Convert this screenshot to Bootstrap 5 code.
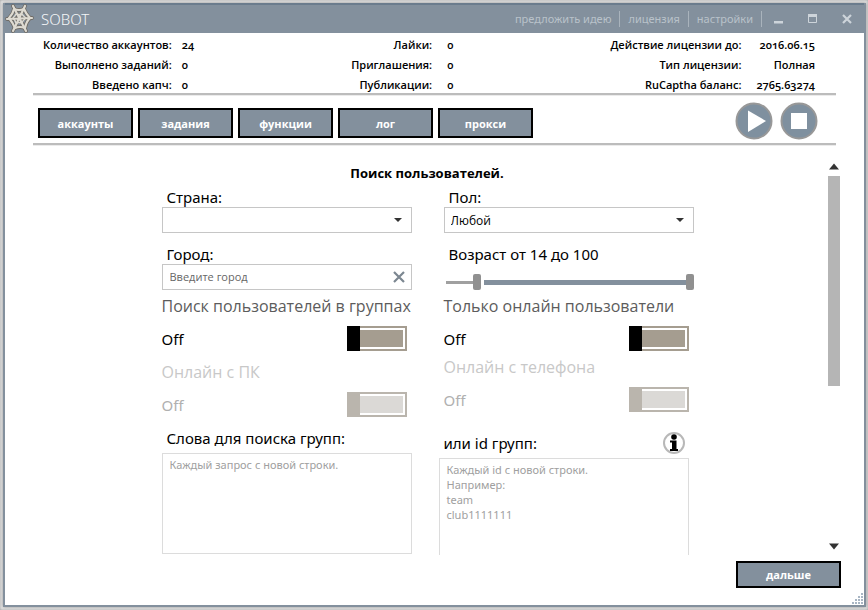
<!DOCTYPE html>
<html lang="ru">
<head>
<meta charset="utf-8">
<meta name="viewport" content="width=device-width, initial-scale=1">
<title>SOBOT</title>
<link href="https://cdn.jsdelivr.net/npm/bootstrap@5.3.0/dist/css/bootstrap.min.css" rel="stylesheet">
<style>
:root { --steel: #83909d; --taupe: #a59d90; }
body { font-family: "Open Sans", "Noto Sans", sans-serif; font-size: 12px; line-height: 20px; color: #000; background: #d4d4d4; }
button, input, select, textarea { font-family: inherit; border-radius: 0; }
.shell { height: 100vh; padding: 3px 2px 3px 3px; box-shadow: inset 0 0 3px #999; background: #ececec; }
.app-window { background: #fff; border: 2px solid var(--steel); border-top: 0; box-shadow: 0 0 3px #888; position: relative; }
.titlebar { background: var(--steel); border-top: 2px solid #6b7c8d; height: 30px; }
.logo { margin-right: 6px; }
.brand { font-size: 15px; color: #f4f6f8; font-weight: 300; font-family: "Noto Sans", sans-serif; }
.title-links a { color: #b9c2ca; text-decoration: none; font-family: "Noto Sans", sans-serif; font-size: 11px; padding: 0 8px; line-height: 16px; border-right: 1px solid #a9b3bc; }
.win-btn { background: none; border: 0; padding: 0; width: 34px; height: 24px; color: #cdd4da; line-height: 0; }
.main-pane { padding: 0 28px; }
.ruled { border-bottom: 2px solid #bcbcbc; box-shadow: 0 1px 0 #ebebeb; }
.stats { padding: 2px 21px 0 10px; height: 62px; font-size: 11px; }
.stat-group { display: grid; grid-template-columns: auto auto; column-gap: 15px; align-content: start; }
.stat-group dt, .stat-group dd { margin: 0; font-weight: 600; text-align: right; }
.stat-group dd { font-feature-settings: "onum"; }
.stat-group:first-child { column-gap: 10px; }
.toolbar { padding: 13px 18px 5px 5px; height: 50px; }
.tabs { gap: 5px; }
.btn-steel { background: var(--steel); border: 2px solid #000; border-radius: 0; color: #fff; font-weight: 700; font-size: 11px; line-height: 20px; padding: 4px 0 2px; width: 95px; height: 30px; }
.btn-steel:hover { background: #6b7c8d; color: #fff; }
.round-set { gap: 7px; margin-top: -6px; }
.round-btn { border: 0; background: none; padding: 0; width: 38px; height: 38px; line-height: 0; }
.scroller { min-height: 0; margin-right: 24px; }
.viewport { overflow: hidden; padding-left: 17px; }
.page-title { font-size: 13px; font-weight: 700; line-height: 20px; padding-top: 18px; padding-left: 4px; margin: 0; }
.cols { gap: 27px; padding-left: 5px; }
.form-col { width: 255px; }
.left-col { width: 250px; }
.upper { padding-left: 5px; }
.lower { padding-right: 5px; }
.field-label { font-family: "Noto Sans", sans-serif; font-size: 15px; line-height: 20px; padding-left: 5px; display: block; }
.first { margin-top: 4px; }
.second { margin-top: 11px; }
.box { border: 1px solid #c6c6c6; background: #fff; width: 100%; height: 26px; padding: 0 7px; font-size: 12px; color: #000; display: block; }
select.box { appearance: none; background: #fff url("data:image/svg+xml,%3Csvg xmlns='http://www.w3.org/2000/svg' width='8' height='4'%3E%3Cpath d='M0 0h8L4 4z' fill='%23333'/%3E%3C/svg%3E") no-repeat right 9px center; padding: 2px 6px 0; }
.city { display: flex; align-items: center; padding-right: 5px; }
.city input { border: 0; outline: 0; padding: 0; min-width: 0; font-size: 11px; }
.city input::placeholder { color: #666; opacity: 1; }
.city button { border: 0; background: none; padding: 0; width: 14px; line-height: 0; }
.opt { padding-top: 6px; }
.opt-title { font-size: 16px; line-height: 20px; color: #5c5c5c; display: block; }
.opt-row { font-family: "Noto Sans", sans-serif; font-size: 15px; line-height: 26px; height: 25px; margin-top: 10px; }
.opt-row input { appearance: none; width: 60px; height: 25px; margin: 0 5px 0 0;
  background: linear-gradient(#000, #000) 0 0 / 13px 25px no-repeat, linear-gradient(var(--taupe), var(--taupe)) 13px 4px / 43px 17px no-repeat, linear-gradient(#fff, #fff) 2px 2px / 56px 21px no-repeat, var(--taupe); }
.opt-row input:checked { background-position: 47px 0, 4px 4px, 2px 2px; }
.opt-row input:disabled { background: linear-gradient(#bab5ad, #bab5ad) 0 0 / 13px 25px no-repeat, linear-gradient(#dbd9d6, #dbd9d6) 13px 4px / 43px 17px no-repeat, linear-gradient(#fff, #fff) 2px 2px / 56px 21px no-repeat, #bab5ad; }
.is-off .opt-title { color: #c8c8c8; }
.is-off .opt-row { color: #b0b0b0; }
.gap-l { padding-top: 11px; }
.ranges { display: grid; height: 16px; margin: 10px 0 0 2px; background: linear-gradient(var(--steel), var(--steel)) right 4px center / 206px 5px no-repeat, linear-gradient(#a0a0a0, #a0a0a0) 0 center / 27px 3px no-repeat; }
.ranges input { grid-area: 1 / 1; appearance: none; background: none; width: 100%; height: 16px; margin: 0; pointer-events: none; }
.ranges input::-webkit-slider-thumb { appearance: none; width: 8px; height: 16px; border-radius: 2px; background: #909090; pointer-events: auto; }
.words { margin: 11px 0 5px; }
.id-head { margin: 20px 0 4px; padding-right: 4px; }
textarea.box { height: 101px; resize: none; border-color: #dcdcdc; font-family: "Noto Sans", sans-serif; font-size: 11px; line-height: 15px; padding: 3px 7px; overflow: hidden; }
textarea.box::placeholder { color: #a0a0a0; opacity: 1; }
.info-btn { border: 0; background: none; padding: 0; line-height: 0; }
.bar { width: 12px; margin: 18px 0 5px; }
.bar button { border: 0; background: none; padding: 0; line-height: 0; height: 7px; }
.bar .thumb { background: #b5b5b5; height: 210px; margin-top: 6px; }
.page-foot { padding: 6px 23px 17px 0; }
.btn-next { width: 105px; height: 27px; padding: 2px 0 1px; }
.grip { position: absolute; right: 0; bottom: 0; }
</style>
<script src="https://cdn.jsdelivr.net/npm/bootstrap@5.3.0/dist/js/bootstrap.bundle.min.js"></script>
</head>
<body>
<div class="shell">
<div class="app-window d-flex flex-column h-100">
  <header class="titlebar d-flex align-items-center">
    <svg width="30" height="30" viewBox="0 0 30 30" fill="none" stroke-linejoin="round" stroke-linecap="round" class="logo" aria-hidden="true">
      <g stroke="#6f6b65" stroke-width="3.8"><path d="M8 2l13 25M20 2L8 27M2 15l25-1"/><path d="M9 5q5 2 10 0q2 5 6 9q-4 4-5 10q-5-2-10 0q-2-5-6-10q4-4 5-9z"/></g>
      <g stroke="#dedbd2" stroke-width="2.2"><path d="M8 2l13 25M20 2L8 27M2 15l25-1"/><path d="M9 5q5 2 10 0q2 5 6 9q-4 4-5 10q-5-2-10 0q-2-5-6-10q4-4 5-9z"/><path stroke-width="1.500" d="M11 10q3 1 6 0q1 2 4 4q-3 2-4 5q-3-1-6 0q-1-3-3-5q2-2 3-4z"/></g>
    </svg>
    <span class="brand me-auto">SOBOT</span>
    <nav class="title-links d-flex"><a href="#">предложить идею</a><a href="#">лицензия</a><a href="#">настройки</a></nav>
    <button class="win-btn" aria-label="Свернуть"><svg width="10" height="10"><path d="M0 7h9v2.500H0z" fill="currentColor"/></svg></button>
    <button class="win-btn" aria-label="Развернуть"><svg width="10" height="10"><path d="M.5 1.500h8v7h-8z" fill="none" stroke="currentColor"/><path d="M0 0h9v3H0z" fill="currentColor"/></svg></button>
    <button class="win-btn" aria-label="Закрыть"><svg width="10" height="10"><path d="M1 1l8 8M9 1L1 9" stroke="currentColor" stroke-width="2.200"/></svg></button>
  </header>
  <div class="main-pane d-flex flex-column">
    <section class="stats ruled d-flex justify-content-between">
      <dl class="stat-group mb-0"><dt>Количество аккаунтов:</dt><dd class="text-start">24</dd><dt>Выполнено заданий:</dt><dd class="text-start">0</dd><dt>Введено капч:</dt><dd class="text-start">0</dd></dl>
      <dl class="stat-group mb-0"><dt>Лайки:</dt><dd>0</dd><dt>Приглашения:</dt><dd>0</dd><dt>Публикации:</dt><dd>0</dd></dl>
      <dl class="stat-group mb-0"><dt>Действие лицензии до:</dt><dd>2016.06.15</dd><dt>Тип лицензии:</dt><dd>Полная</dd><dt>RuCaptha баланс:</dt><dd>2765.63274</dd></dl>
    </section>
    <section class="toolbar ruled d-flex align-items-start">
      <div class="tabs d-flex me-auto"><button class="btn btn-steel">аккаунты</button><button class="btn btn-steel">задания</button><button class="btn btn-steel">функции</button><button class="btn btn-steel">лог</button><button class="btn btn-steel">прокси</button></div>
      <div class="d-flex round-set"><button class="round-btn" aria-label="Пуск"><svg width="38" height="38"><circle cx="19" cy="19" r="17.500" fill="#7f909f" stroke="#989898" stroke-width="2"/><path d="M13 8.500L31 19 13 30z" fill="#fff"/></svg></button><button class="round-btn" aria-label="Стоп"><svg width="38" height="38"><circle cx="19" cy="19" r="17.500" fill="#7f909f" stroke="#989898" stroke-width="2"/><path d="M11 11h16v16H11z" fill="#fff"/></svg></button></div>
    </section>
  </div>
  <main class="scroller d-flex flex-grow-1">
    <div class="viewport flex-grow-1">
      <h1 class="page-title text-center">Поиск пользователей.</h1>
      <form class="d-flex justify-content-center cols">
        <div class="left-col">
          <label class="field-label first" for="country">Страна:</label>
          <select class="box" id="country"><option></option></select>
          <label class="field-label second" for="city">Город:</label>
          <div class="box city"><input id="city" class="flex-grow-1" type="text" placeholder="Введите город"><button type="button" aria-label="Очистить"><svg width="14" height="14"><path d="M2 2l10 10M12 2L2 12" stroke="#7c8791" stroke-width="2.200"/></svg></button></div>
          <div class="opt"><label class="opt-title" for="s1">Поиск пользователей в группах</label>
            <div class="opt-row d-flex justify-content-between"><span>Off</span><input type="checkbox" role="switch" id="s1"></div></div>
          <div class="opt is-off gap-l"><label class="opt-title" for="s2">Онлайн с ПК</label>
            <div class="opt-row d-flex justify-content-between"><span>Off</span><input type="checkbox" role="switch" id="s2" disabled></div></div>
          <label class="field-label words" for="words">Слова для поиска групп:</label>
          <textarea class="box" id="words" placeholder="Каждый запрос с новой строки."></textarea>
        </div>
        <div class="form-col">
          <div class="upper">
          <label class="field-label first" for="sex">Пол:</label>
          <select class="box" id="sex"><option>Любой</option></select>
          <label class="field-label second" for="age">Возраст от 14 до 100</label>
          <div class="ranges"><input type="range" id="age" min="3" max="100" value="14"><input type="range" aria-label="Возраст до" min="3" max="100" value="100"></div>
          <div class="opt"><label class="opt-title" for="s3">Только онлайн пользователи</label>
            <div class="opt-row d-flex justify-content-between"><span>Off</span><input type="checkbox" role="switch" id="s3"></div></div>
          <div class="opt is-off"><label class="opt-title" for="s4">Онлайн с телефона</label>
            <div class="opt-row d-flex justify-content-between"><span>Off</span><input type="checkbox" role="switch" id="s4" disabled></div></div>
          </div>
          <div class="lower">
          <div class="d-flex justify-content-between align-items-center id-head"><label class="field-label" for="ids">или id групп:</label><button type="button" class="info-btn" aria-label="Справка"><svg width="22" height="22"><circle cx="11" cy="11" r="10" fill="#fff" stroke="#b8b8b8" stroke-width="2"/><circle cx="11" cy="5" r="2.800"/><path d="M7 8.500h6.500V17H15v2H7v-2h2v-6.500H7z"/></svg></button></div>
          <textarea class="box" id="ids" placeholder="Каждый id с новой строки.&#10;Например:&#10;team&#10;club1111111"></textarea>
          </div>
        </div>
      </form>
    </div>
    <div class="bar d-flex flex-column">
      <button aria-label="Вверх"><svg width="12" height="7"><path d="M1 6.500L6 .5l5 6z" fill="#333"/></svg></button>
      <div class="thumb"></div>
      <button class="mt-auto" aria-label="Вниз"><svg width="12" height="7"><path d="M1 .5L6 6.500l5-6z" fill="#333"/></svg></button>
    </div>
  </main>
  <footer class="page-foot d-flex justify-content-end"><button class="btn btn-steel btn-next">дальше</button></footer>
  <svg class="grip" width="12" height="12" fill="#a9b6c4" aria-hidden="true"><path d="M9 0h2v2H9zM9 3h2v2H9zM6 3h2v2H6zM9 6h2v2H9zM6 6h2v2H6zM3 6h2v2H3zM9 9h2v2H9zM6 9h2v2H6zM3 9h2v2H3zM0 9h2v2H0z"/></svg>
</div>
</div>
</body>
</html>
